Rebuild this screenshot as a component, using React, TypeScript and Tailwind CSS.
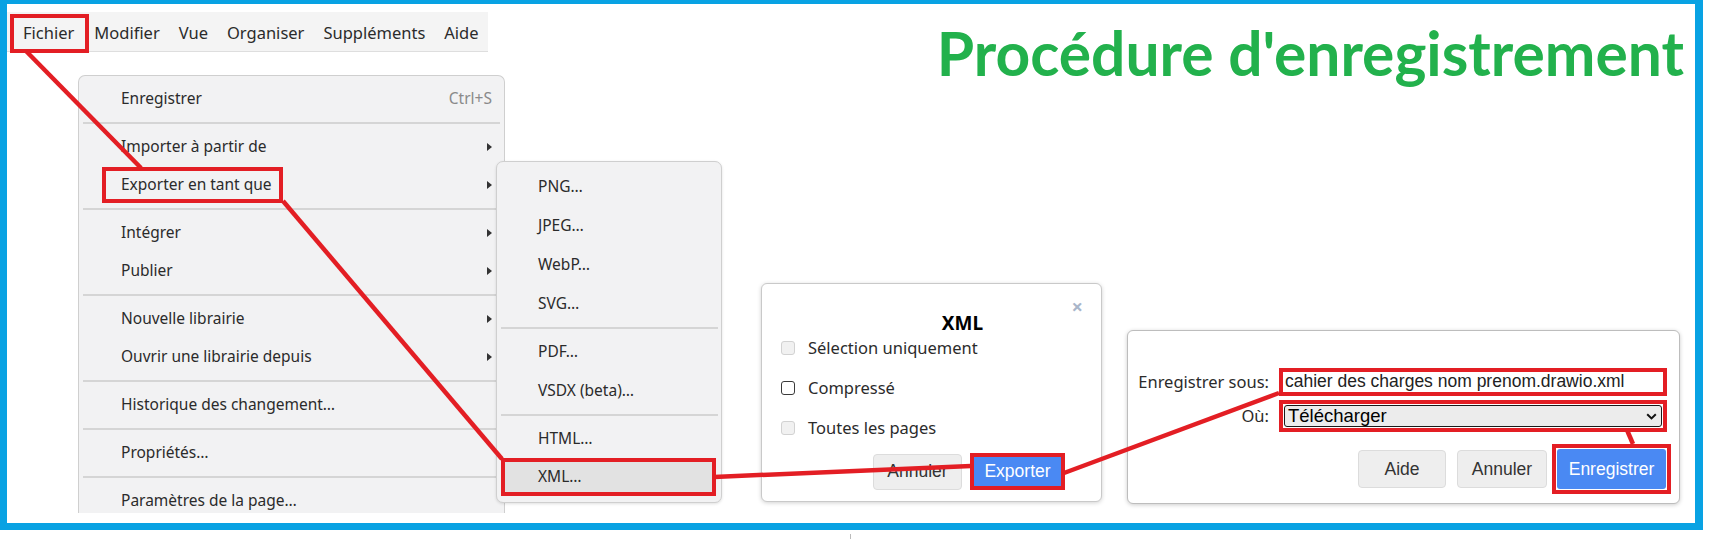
import React from 'react';

type Entry = { label: string; arrow?: boolean; shortcut?: string; boxed?: boolean } | 'sep';

const mainMenu: Entry[] = [
  { label: 'Enregistrer', shortcut: 'Ctrl+S' },
  'sep',
  { label: 'Importer à partir de', arrow: true },
  { label: 'Exporter en tant que', arrow: true, boxed: true },
  'sep',
  { label: 'Intégrer', arrow: true },
  { label: 'Publier', arrow: true },
  'sep',
  { label: 'Nouvelle librairie', arrow: true },
  { label: 'Ouvrir une librairie depuis', arrow: true },
  'sep',
  { label: 'Historique des changement…' },
  'sep',
  { label: 'Propriétés…' },
  'sep',
  { label: 'Paramètres de la page…' },
];

const exportMenu: Entry[] = [
  { label: 'PNG…' },
  { label: 'JPEG…' },
  { label: 'WebP…' },
  { label: 'SVG…' },
  'sep',
  { label: 'PDF…' },
  { label: 'VSDX (beta)…' },
  'sep',
  { label: 'HTML…' },
  { label: 'XML…', boxed: true },
];

const Arrow = () => (
  <span className="w-0 h-0 border-y-[4px] border-y-transparent border-l-[5px] border-l-[#333]" />
);

const MainMenu = () => (
  <div className="ml-[71px] w-[427px] h-[438px] shrink-0 overflow-hidden rounded-t-[7px] border border-b-0 border-[#cfcfcf] bg-[#f2f2f3] pt-[4px] text-[15.5px] text-[#2b2b2b] whitespace-nowrap">
    {mainMenu.map((e, i) =>
      e === 'sep' ? (
        <div key={i} className="h-[10px] flex items-center px-[4px]">
          <div className="h-[2px] w-full bg-[#d5d5d5]" />
        </div>
      ) : (
        <div key={i} className="h-[38px] flex items-center justify-between pr-[12px]">
          {e.boxed ? (
            <span className="ml-[23px] h-[36px] w-[181px] flex items-center pl-[15px] border-4 border-[#e31e24]">
              {e.label}
            </span>
          ) : (
            <span className="pl-[42px]">{e.label}</span>
          )}
          {e.arrow && <Arrow />}
          {e.shortcut && <span className="text-[#8a8a8a]">{e.shortcut}</span>}
        </div>
      )
    )}
  </div>
);

const ExportMenu = () => (
  <div className="-ml-[9px] mt-[86px] w-[226px] h-[342px] shrink-0 rounded-[7px] border border-[#cfcfcf] bg-[#f2f2f3] py-[5px] text-[15.5px] text-[#2b2b2b] whitespace-nowrap shadow-[0_1px_3px_rgba(0,0,0,0.12)]">
    {exportMenu.map((e, i) =>
      e === 'sep' ? (
        <div key={i} className="h-[9px] flex items-center pl-[4px] pr-[3px]">
          <div className="h-[2px] w-full bg-[#d5d5d5]" />
        </div>
      ) : e.boxed ? (
        <div key={i} className="h-[39px] pl-[4px] pr-[5px]">
          <div className="h-[38px] flex items-center pl-[33px] border-4 border-[#e31e24] bg-[#e2e2e2]">
            {e.label}
          </div>
        </div>
      ) : (
        <div key={i} className="h-[39px] flex items-center pl-[41px]">
          {e.label}
        </div>
      )
    )}
  </div>
);

const Check = ({ label, enabled }: { label: string; enabled?: boolean }) => (
  <div className="h-[30px] flex items-center gap-[13px] pl-[19px]">
    <span
      className={
        enabled
          ? 'w-[14px] h-[14px] rounded-[3px] border border-[#3a3a3a] bg-white'
          : 'w-[14px] h-[14px] rounded-[3px] border border-[#d2d2d2] bg-[#f1f1f1]'
      }
    />
    <span>{label}</span>
  </div>
);

const XmlDialog = () => (
  <div className="relative ml-[39px] mt-[208px] w-[341px] h-[219px] shrink-0 rounded-[6px] border border-[#c9c9c9] bg-white shadow-[0_1px_4px_rgba(0,0,0,0.18)] pt-[29px] text-[#2b2b2b]">
    <span className="absolute right-[18px] top-[11px] text-[20px] leading-[24px] font-bold text-[#a9b6ca]">×</span>
    <div className="pl-[62px] text-center text-[19px] leading-[20px] font-bold text-black">XML</div>
    <div className="flex flex-col gap-[10px]">
      <Check label="Sélection uniquement" />
      <Check label="Compressé" enabled />
      <Check label="Toutes les pages" />
    </div>
    <div className="mt-[10px] flex items-center justify-end gap-[8px] pr-[36px] font-['Liberation_Sans',Arial,sans-serif] text-[17.5px]">
      <button className="h-[36px] w-[89px] rounded-[4px] border border-[#dcdcdc] bg-[#eeeeee] text-[#333]">Annuler</button>
      <button className="h-[37px] w-[95px] border-4 border-[#e31e24] bg-[#4a89f3] text-white">Exporter</button>
    </div>
  </div>
);

const SaveDialog = () => (
  <div className="ml-[25px] mt-[255px] w-[553px] h-[174px] shrink-0 rounded-[6px] border border-[#bdbdbd] bg-white shadow-[0_1px_4px_rgba(0,0,0,0.2)] pt-[37px]">
    <div className="grid grid-cols-[141px_388px] gap-x-[10px] gap-y-[4px] items-center">
      <span className="text-right text-[#2b2b2b]">Enregistrer sous:</span>
      <div className="h-[28px] border-4 border-[#e31e24] bg-white flex items-center pl-[2px] font-['Liberation_Sans',Arial,sans-serif] text-[17.5px] text-[#222] leading-none whitespace-nowrap overflow-hidden">
        cahier des charges nom prenom.drawio.xml
      </div>
      <span className="text-right text-[#2b2b2b]">Où:</span>
      <div className="h-[32px] border-4 border-[#e31e24] bg-white p-[1px]">
        <div className="h-full rounded-[3px] border border-[#1a1a1a] bg-[#ececec] flex items-center justify-between pl-[3px] pr-[4px] font-['Liberation_Sans',Arial,sans-serif] text-[18.5px] leading-none text-black">
          <span>Télécharger</span>
          <svg width="11" height="7" viewBox="0 0 11 7">
            <path d="M1.2 1.2 L5.5 5.4 L9.8 1.2" fill="none" stroke="#111" strokeWidth="2" />
          </svg>
        </div>
      </div>
    </div>
    <div className="mt-[12px] flex items-center font-['Liberation_Sans',Arial,sans-serif] text-[17.5px]">
      <button className="ml-[230px] h-[38px] w-[88px] rounded-[4px] border border-[#dcdcdc] bg-[#eeeeee] text-[#333]">Aide</button>
      <button className="ml-[11px] h-[38px] w-[90px] rounded-[4px] border border-[#dcdcdc] bg-[#eeeeee] text-[#333]">Annuler</button>
      <div className="ml-[5px] h-[50px] w-[119px] border-4 border-[#e31e24] p-[1px]">
        <button className="h-full w-full rounded-[3px] bg-[#4a89f3] text-white">Enregistrer</button>
      </div>
    </div>
  </div>
);

const Connectors = () => (
  <svg className="absolute inset-0 pointer-events-none" width="1720" height="541" viewBox="0 0 1720 541">
    <g stroke="#e31e24" strokeWidth="4.5" fill="none" strokeLinecap="butt">
      <line x1="26" y1="51" x2="141" y2="168" />
      <line x1="283" y1="201" x2="502" y2="459" />
      <line x1="714" y1="477" x2="971" y2="466" />
      <line x1="1064" y1="473" x2="1279" y2="393" />
      <line x1="1627" y1="430" x2="1633" y2="444" />
    </g>
  </svg>
);

export default function App() {
  return (
    <div className="relative w-[1720px] h-[541px] bg-white overflow-hidden font-['Noto_Sans','Open_Sans',sans-serif] text-[16.5px]">
      <div className="w-[1703px] h-[530px] border-l-[7px] border-t-[4px] border-r-[8px] border-b-[7px] border-[#08a2e3] flex flex-col">
        {/* header: menubar + title */}
        <div className="h-[71px] flex items-start justify-between">
          <div className="mt-[8px] h-[40px] w-[481px] flex items-center bg-[#f4f4f4] border-b border-[#dedede] text-[#2b2b2b]">
            <span className="ml-[3px] mt-[3px] h-[39px] flex items-center pl-[9px] pr-[11px] border-4 border-[#e31e24]">Fichier</span>
            <div className="ml-[5px] mt-[3px] flex items-center gap-[19px]">
              <span>Modifier</span>
              <span>Vue</span>
              <span>Organiser</span>
              <span>Suppléments</span>
              <span>Aide</span>
            </div>
          </div>
          <h1 className="mt-[19px] mr-[11px] font-['Lato',sans-serif] font-bold text-[60.5px] leading-none text-[#22b14c] whitespace-nowrap">
            Procédure d'enregistrement
          </h1>
        </div>
        {/* body: menus and dialogs */}
        <div className="flex items-start">
          <MainMenu />
          <ExportMenu />
          <XmlDialog />
          <SaveDialog />
        </div>
      </div>
      <div className="ml-[850px] mt-[4px] h-[5px] w-px bg-[#bbb]" />
      <Connectors />
    </div>
  );
}
